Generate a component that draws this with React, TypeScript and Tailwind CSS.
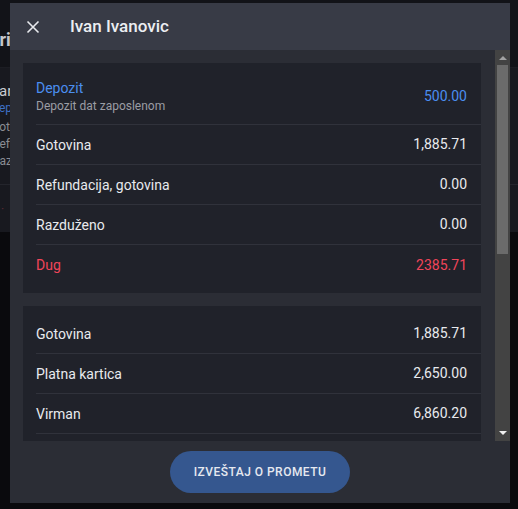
import React from 'react';

type Row = { label: string; value: string; tone?: 'blue' | 'red'; sub?: string };

const summary: Row[] = [
  { label: 'Depozit', sub: 'Depozit dat zaposlenom', value: '500.00', tone: 'blue' },
  { label: 'Gotovina', value: '1,885.71' },
  { label: 'Refundacija, gotovina', value: '0.00' },
  { label: 'Razduženo', value: '0.00' },
  { label: 'Dug', value: '2385.71', tone: 'red' },
];

const payments: Row[] = [
  { label: 'Gotovina', value: '1,885.71' },
  { label: 'Platna kartica', value: '2,650.00' },
  { label: 'Virman', value: '6,860.20' },
  { label: 'Ček', value: '0.00' },
  { label: 'Vaučer', value: '0.00' },
  { label: 'Instant plaćanje', value: '0.00' },
  { label: 'Refundacija, kartica', value: '0.00' },
  { label: 'Refundacija, virman', value: '0.00' },
  { label: 'Avans', value: '0.00' },
  { label: 'Storno', value: '0.00' },
  { label: 'Ukupno', sub: 'Svi načini plaćanja', value: '11,395.91' },
];

const toneClass = (tone?: Row['tone']) =>
  tone === 'blue' ? 'text-[#4b8ef0]' : tone === 'red' ? 'text-[#f0455a]' : 'text-[#e8eaee]';

const ListRow: React.FC<{ row: Row; last: boolean }> = ({ row, last }) => (
  <div className="pl-[13px]">
    <div
      className={`flex items-center justify-between pr-[14px] ${row.sub ? 'pt-[7px] pb-[10px]' : 'h-[40px]'} ${
        last ? '' : 'border-b border-[#30323b]'
      }`}
    >
      <div className="flex flex-col">
        <span className={`text-[14px] leading-[20px] ${toneClass(row.tone)}`}>{row.label}</span>
        {row.sub && <span className="text-[12px] leading-[16px] text-[#9b9da4]">{row.sub}</span>}
      </div>
      <span className={`text-[14px] ${toneClass(row.tone)}`}>{row.value}</span>
    </div>
  </div>
);

const Card: React.FC<{ rows: Row[] }> = ({ rows }) => (
  <div className="bg-[#20222a] py-2 shrink-0">
    {rows.map((r, i) => (
      <ListRow key={r.label + i} row={r} last={i === rows.length - 1} />
    ))}
  </div>
);

// classic dark scrollbar, drawn since the headless page hides the native one
const Scrollbar: React.FC = () => (
  <div className="w-[15px] shrink-0 bg-[#434343] flex flex-col items-center">
    <div className="h-[15px] w-full flex items-center justify-center">
      <svg width="8" height="5" viewBox="0 0 8 5">
        <path d="M0 5L4 1l4 4z" fill="#a3a3a3" />
      </svg>
    </div>
    <div className="w-[11px] h-[189px] bg-[#6b6b6b]" />
    <div className="mt-auto h-[15px] w-full flex items-center justify-center">
      <svg width="8" height="5" viewBox="0 0 8 5">
        <path d="M0 0l4 4 4-4z" fill="#f0f0f0" />
      </svg>
    </div>
  </div>
);

export default function App() {
  return (
    <div
      className="relative w-[518px] h-[509px] overflow-hidden bg-[#0a0a0d]"
      style={{ fontFamily: 'Roboto, "Noto Sans", sans-serif' }}
    >
      {/* page behind the dialog */}
      <div className="h-[68px] bg-[#121318] border-b border-[#1c1d23] flex items-center">
        <span className="-ml-[12px] mt-[12px] text-[18px] font-bold text-[#c4c6cb]">Kris</span>
      </div>
      <div className="h-[164px] bg-[#18191f] flex flex-col">
        <div className="pt-[14px] flex flex-col">
          <span className="-ml-[14px] text-[15px] leading-[18px] text-[#c9cbd0]">Marko</span>
          <span className="-ml-[9px] text-[12px] leading-[17px] text-[#3d6fc4]">Depozit</span>
          <span className="-ml-[9px] text-[12px] leading-[18px] mt-[1px] text-[#8a8c92]">Gotovina</span>
          <span className="-ml-[8px] text-[12px] leading-[17px] text-[#8a8c92]">Refundacija</span>
          <span className="-ml-[8px] text-[12px] leading-[17px] text-[#8a8c92]">Razduženo</span>
        </div>
        <div className="mt-auto border-t border-[#24252c] h-[48px] flex items-center pl-[1px] gap-[7px] text-[12px]">
          <span className="text-[#5a2a33]">·</span>
          <span className="text-[#3a3b40]">2</span>
        </div>
      </div>

      {/* dialog */}
      <div className="absolute left-[10px] top-[3px] w-[500px] h-[500px] flex flex-col bg-[#2b2d35]">
        <div className="h-[47px] shrink-0 bg-[#383b46] flex items-center">
          <button className="w-[46px] h-[46px] flex items-center justify-center text-[#e8eaee]">
            <svg width="14" height="14" viewBox="0 0 14 14" fill="none" stroke="currentColor" strokeWidth="1.6">
              <path d="M1.5 1.5l11 11M12.5 1.5l-11 11" />
            </svg>
          </button>
          <h2 className="ml-[14px] text-[17px] font-medium text-[#eceef2]">Ivan Ivanovic</h2>
        </div>

        <div className="h-[391px] shrink-0 flex">
          <div className="flex-1 overflow-hidden pl-[13px] pr-[14px] pt-[13px] flex flex-col gap-[13px]">
            <Card rows={summary} />
            <Card rows={payments} />
          </div>
          <Scrollbar />
        </div>

        <div className="flex-1 flex items-center justify-center">
          <button className="w-[180px] h-[42px] rounded-full bg-[#35578f] text-[12px] font-medium tracking-[0.04em] text-[#e6e9f0]">
            IZVEŠTAJ O PROMETU
          </button>
        </div>
      </div>
    </div>
  );
}
